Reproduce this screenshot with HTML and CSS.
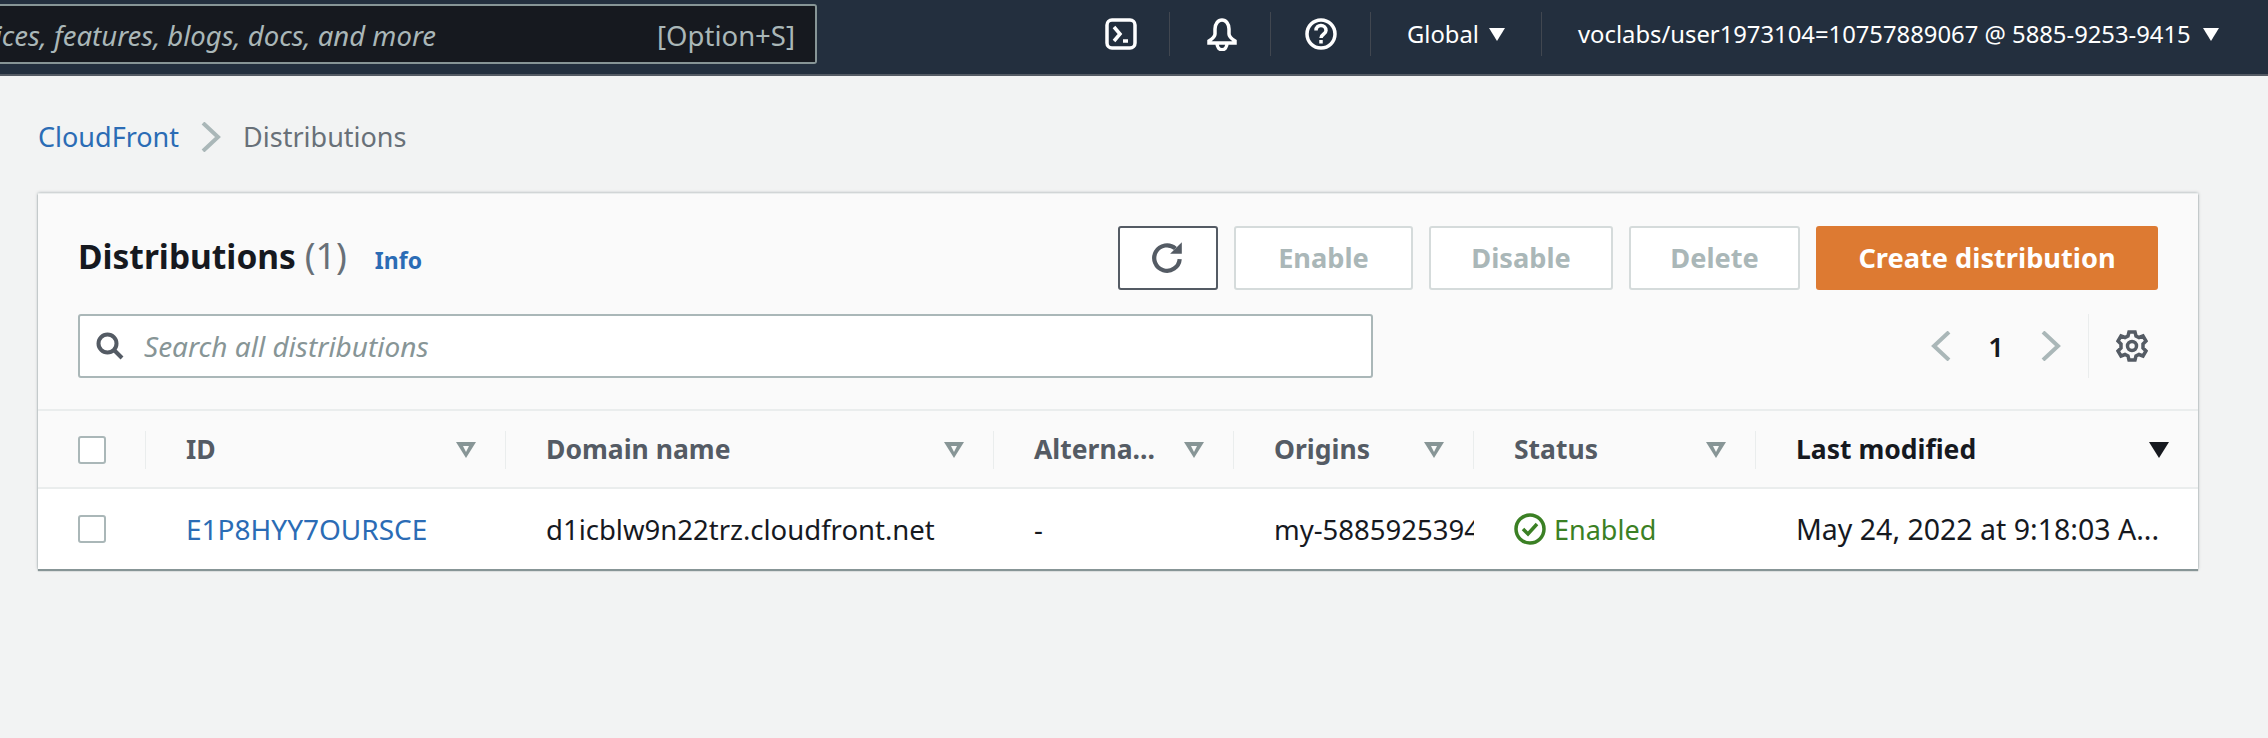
FILE: index.html
```html
<!DOCTYPE html>
<html lang="en">
<head>
    <meta charset="UTF-8">
    <title>Distributions | CloudFront</title>
    <link rel="stylesheet" href="styles.css">
</head>
<body>
    <header class="topbar">
        <div class="global-search">
            <span class="global-search-text">Search for services, features, blogs, docs, and more</span>
            <span class="global-search-key">[Option+S]</span>
        </div>
        <nav class="topnav">
            <div class="topnav-item topnav-terminal">
                <svg width="32" height="32" viewBox="0 0 32 32" fill="none" stroke="#fff" stroke-width="3.500"><rect x="2" y="2" width="28" height="28" rx="5"/><path d="M9 9l6 7-6 7"/><path d="M18 23h5"/></svg>
            </div>
            <div class="topnav-item topnav-bell">
                <svg width="32" height="34" viewBox="0 0 32 34" fill="none" stroke="#fff" stroke-width="3.500"><path d="M16 3c-4 0-7 4-7 9v5c0 3-3 5-6 7v2h26v-2c-3-2-6-4-6-7v-5c0-5-3-9-7-9z"/><path d="M11 26c0 9 10 9 10 0"/></svg>
            </div>
            <div class="topnav-item topnav-help">
                <svg width="32" height="32" viewBox="0 0 32 32" fill="none" stroke="#fff" stroke-width="3.500"><circle cx="16" cy="16" r="14"/><path d="M11 12.500c0-7 10-6.500 10 0 0 4-5 3.500-5 7.500"/><path d="M16 22v3.500"/></svg>
            </div>
            <div class="topnav-item topnav-region">Global <span class="caret"></span></div>
            <div class="topnav-item topnav-user">voclabs/user1973104=10757889067 @ 5885-9253-9415 <span class="caret"></span></div>
        </nav>
    </header>

    <main class="content">
        <div class="breadcrumbs">
            <a class="link">CloudFront</a>
            <svg width="20" height="30" viewBox="0 0 20 30" fill="none" stroke="#aab7b8" stroke-width="4"><path d="M2 1l15 14L2 29"/></svg>
            <span class="crumb-current">Distributions</span>
        </div>

        <section class="card">
            <div class="card-head">
                <div class="card-head-top">
                    <h1 class="card-title">Distributions <span class="count">(1)</span></h1>
                    <a class="link info">Info</a>
                    <div class="actions">
                        <button class="btn btn-refresh">
                            <svg width="34" height="34" viewBox="0 0 32 32" fill="none" stroke="#545b64" stroke-width="4"><path d="M27 18a12 12 0 1 1-4-10"/><path d="M29 2v11H18z" fill="#545b64" stroke="none"/></svg>
                        </button>
                        <button class="btn btn-disabled btn-enable">Enable</button>
                        <button class="btn btn-disabled btn-disable">Disable</button>
                        <button class="btn btn-disabled btn-delete">Delete</button>
                        <button class="btn btn-primary">Create distribution</button>
                    </div>
                </div>
                <div class="card-head-bottom">
                    <div class="search">
                        <svg width="28" height="28" viewBox="0 0 28 28" fill="none" stroke="#545b64" stroke-width="4"><circle cx="11.500" cy="11.500" r="9"/><path d="M18 18l8 8"/></svg>
                        <span>Search all distributions</span>
                    </div>
                    <div class="pager">
                        <svg width="20" height="30" viewBox="0 0 20 30" fill="none" stroke="#aab7b8" stroke-width="4"><path d="M18 1L3 15l15 14"/></svg>
                        <span class="pager-num">1</span>
                        <svg width="20" height="30" viewBox="0 0 20 30" fill="none" stroke="#aab7b8" stroke-width="4"><path d="M2 1l15 14L2 29"/></svg>
                    </div>
                    <div class="pager-settings">
                        <svg width="32" height="32" viewBox="0 0 32 32" fill="none" stroke="#545b64" stroke-width="3.500"><circle cx="16" cy="16" r="4.500"/><path d="M13 2h6l1 4 3 1.500 4-1.500 3 5-3 3v4l3 3-3 5-4-1.500-3 1.500-1 4h-6l-1-4-3-1.500-4 1.500-3-5 3-3v-4l-3-3 3-5 4 1.500 3-1.500z"/></svg>
                    </div>
                </div>
            </div>

            <div class="table-row table-head">
                <div class="cell cell-check"><span class="checkbox"></span></div>
                <div class="cell"><span class="cell-label">ID</span><span class="sort"></span></div>
                <div class="cell"><span class="cell-label">Domain name</span><span class="sort"></span></div>
                <div class="cell"><span class="cell-label">Alterna...</span><span class="sort"></span></div>
                <div class="cell"><span class="cell-label">Origins</span><span class="sort"></span></div>
                <div class="cell"><span class="cell-label">Status</span><span class="sort"></span></div>
                <div class="cell cell-last cell-sorted"><span class="cell-label">Last modified</span><span class="sort-active"></span></div>
            </div>
            <div class="table-row table-body">
                <div class="cell cell-check"><span class="checkbox"></span></div>
                <div class="cell cell-id"><a class="link">E1P8HYY7OURSCE</a></div>
                <div class="cell">d1icblw9n22trz.cloudfront.net</div>
                <div class="cell">-</div>
                <div class="cell cell-clip"><span class="cell-clip-text">my-5885925394</span></div>
                <div class="cell cell-status">
                    <svg width="32" height="32" viewBox="0 0 32 32" fill="none" stroke="#3b8024" stroke-width="3.500"><circle cx="16" cy="16" r="14"/><path d="M9 16l5 5 9-10"/></svg>
                    <span>Enabled</span>
                </div>
                <div class="cell cell-last cell-date">May 24, 2022 at 9:18:03 A...</div>
            </div>
        </section>
    </main>
</body>
</html>
```

FILE: styles.css
```css
* {
    box-sizing: border-box;
}
body {
    margin: 0;
    background-color: #f2f3f3;
    color: #16191f;
    font-family: "Noto Sans", sans-serif;
    font-size: 27.5px;
}
.link {
    color: #2b6cb5;
}

/* top navigation */
.topbar {
    display: flex;
    height: 76px;
    background-color: #232f3e;
    border-bottom: 2px solid #545b64;
    color: #fff;
}
.global-search {
    display: flex;
    justify-content: flex-end;
    align-items: center;
    flex: none;
    width: 817px;
    height: 60px;
    margin-top: 4px;
    padding: 2px 20px 0 0;
    background-color: #16191f;
    border: 2px solid #879596;
    border-left: 0;
    border-radius: 0 3px 3px 0;
    color: #aab7b8;
    overflow: hidden;
    white-space: nowrap;
}
.global-search-text {
    flex: none;
    margin-right: 221px;
    font-style: italic;
}
.global-search-key {
    flex: none;
}
.topnav {
    display: flex;
    align-items: center;
    height: 44px;
    margin-top: 12px;
}
.topnav-item {
    display: flex;
    align-items: center;
    justify-content: center;
    height: 44px;
    border-right: 1px solid #414750;
    font-size: 23.8px;
    white-space: nowrap;
}
.topnav-terminal {
    width: 353px;
    justify-content: flex-end;
    padding-right: 32px;
}
.topnav-bell {
    width: 101px;
    padding-left: 4px;
}
.topnav-help {
    width: 100px;
}
.topnav-region {
    width: 171px;
    gap: 10px;
}
.topnav-user {
    border-right: 0;
    margin-left: 36px;
    gap: 12px;
}
.caret {
    width: 0;
    height: 0;
    border-left: 8px solid transparent;
    border-right: 8px solid transparent;
    border-top: 13px solid #fff;
}

/* page */
.content {
    padding: 0 70px 40px 38px;
}
.breadcrumbs {
    display: flex;
    align-items: center;
    gap: 22px;
    height: 117px;
    padding-top: 4px;
    font-size: 27px;
    color: #687078;
}

/* distributions card */
.card {
    background-color: #fff;
    border-top: 1px solid #eaeded;
    box-shadow: 0 2px 1px 0 #879596, 0 0 3px 0 rgba(0, 28, 36, 0.35);
}
.card-head {
    height: 217px;
    padding: 32px 40px 0;
    background-color: #fafafa;
    border-bottom: 2px solid #eaeded;
}
.card-head-top {
    display: flex;
    align-items: center;
}
.card-title {
    margin: -6px 0 0;
    font-size: 33.5px;
    font-weight: 700;
}
.count {
    font-size: 36px;
    font-weight: 400;
    color: #687078;
}
.info {
    margin-left: 28px;
    margin-top: 4px;
    font-size: 23px;
    font-weight: 700;
}
.actions {
    display: flex;
    gap: 16px;
    margin-left: auto;
}
.btn {
    height: 64px;
    padding-bottom: 3px;
    border: 2px solid #d5dbdb;
    border-radius: 3px;
    background-color: #fff;
    font-family: inherit;
    font-size: 27.2px;
    font-weight: 700;
}
.btn-refresh {
    display: flex;
    align-items: center;
    justify-content: center;
    width: 100px;
    border-color: #545b64;
}
.btn-disabled {
    color: #aab7b8;
}
.btn-enable {
    width: 179px;
}
.btn-disable {
    width: 184px;
}
.btn-delete {
    width: 171px;
}
.btn-primary {
    width: 342px;
    border: 0;
    background-color: #dd7a32;
    color: #fff;
}
.card-head-bottom {
    display: flex;
    align-items: center;
    margin-top: 24px;
}
.search {
    display: flex;
    align-items: center;
    gap: 20px;
    width: 1295px;
    height: 64px;
    padding-left: 16px;
    background-color: #fff;
    border: 2px solid #aab7b8;
    border-radius: 3px;
    font-size: 28px;
    color: #879596;
    font-style: italic;
}
.pager {
    display: flex;
    align-items: center;
    gap: 37px;
    margin-left: auto;
    padding-right: 27px;
}
.pager-num {
    font-weight: 600;
}
.pager-settings {
    display: flex;
    align-items: center;
    justify-content: flex-end;
    width: 60px;
    height: 64px;
    margin-right: 10px;
    border-left: 1px solid #eaeded;
}

/* table */
.table-row {
    display: grid;
    grid-template-columns: 108px 360px 488px 240px 240px 282px 1fr;
}
.table-head {
    height: 78px;
    background-color: #fafafa;
    border-bottom: 2px solid #eaeded;
    font-size: 26.5px;
    color: #545b64;
    font-weight: 700;
}
.table-head .cell {
    height: 38px;
    margin-top: 20px;
    border-right: 1px solid #eaeded;
}
.table-head .cell-last {
    border-right: 0;
}
.table-head .cell-label {
    margin-top: -2px;
}
.table-body {
    height: 80px;
}
.cell {
    display: flex;
    align-items: center;
    justify-content: space-between;
    min-width: 0;
    padding: 0 29px 0 40px;
    white-space: nowrap;
}
.cell-id {
    font-size: 28px;
}
.cell-clip {
    overflow: hidden;
    padding-right: 0;
}
.cell-clip-text {
    flex: none;
}
.cell-status {
    justify-content: flex-start;
    gap: 8px;
    font-size: 27px;
    color: #3b8024;
}
.cell-sorted {
    color: #16191f;
}
.cell-date {
    font-size: 28.5px;
    padding-right: 0;
}
.checkbox {
    width: 28px;
    height: 28px;
    background-color: #fff;
    border: 2px solid #aab7b8;
    border-radius: 3px;
}
.sort {
    width: 0;
    height: 0;
    position: relative;
    border-left: 10px solid transparent;
    border-right: 10px solid transparent;
    border-top: 16px solid #879596;
}
.sort::after {
    content: "";
    position: absolute;
    left: -3px;
    top: -12px;
    border-left: 3px solid transparent;
    border-right: 3px solid transparent;
    border-top: 6px solid #fafafa;
}
.sort-active {
    width: 0;
    height: 0;
    border-left: 10px solid transparent;
    border-right: 10px solid transparent;
    border-top: 16px solid #16191f;
}
```
